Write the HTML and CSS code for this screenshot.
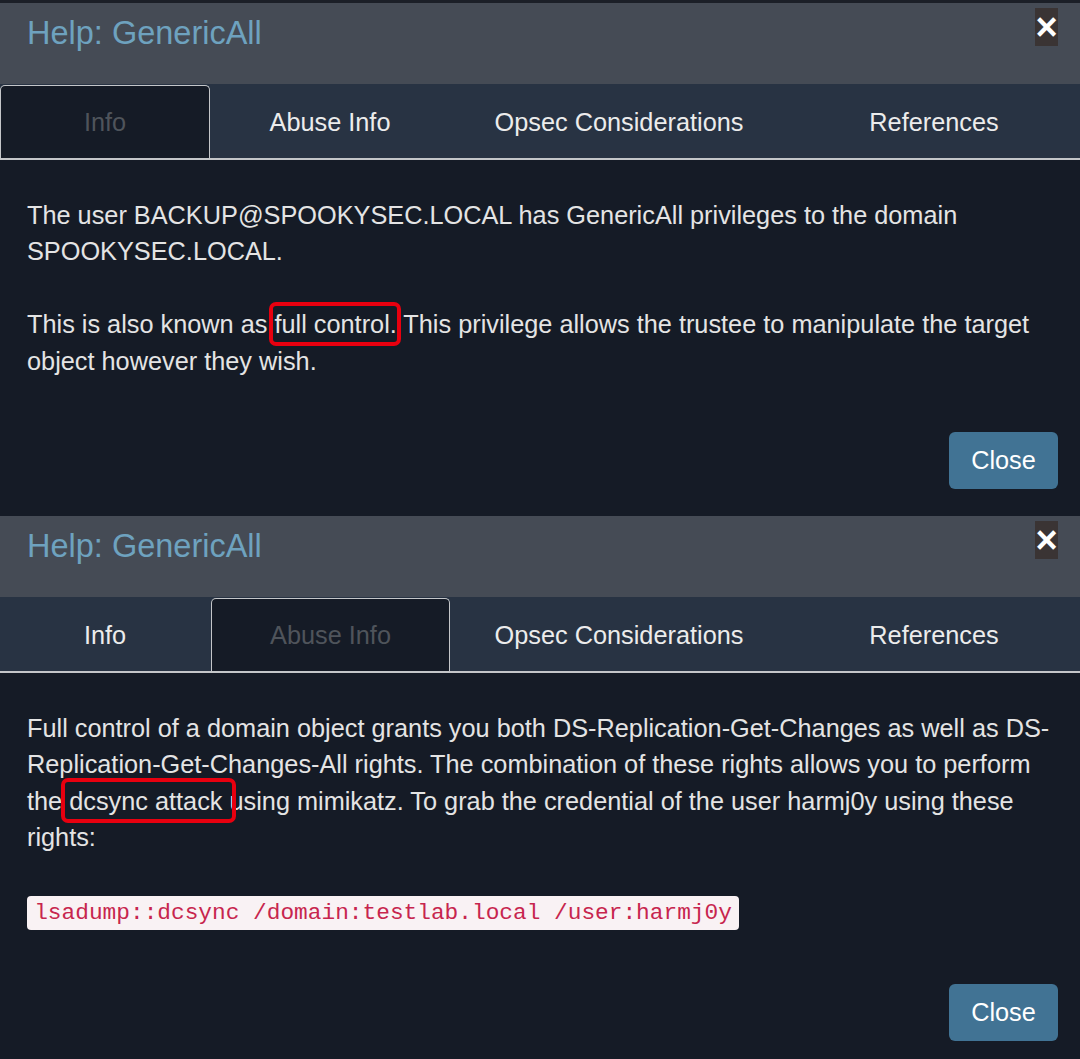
FILE: index.html
```html
<!DOCTYPE html>
<html>
<head>
<meta charset="utf-8">
<link rel="stylesheet" href="styles.css">
</head>
<body>
<div class="topstrip"></div>
<section class="modal">
  <header class="modal-header">
    <h4 class="modal-title">Help: GenericAll</h4>
    <button class="x-btn">&times;</button>
  </header>
  <nav class="tabs">
    <div class="tab tab-info active">Info</div>
    <div class="tab tab-abuse">Abuse Info</div>
    <div class="tab tab-opsec">Opsec Considerations</div>
    <div class="tab tab-refs">References</div>
  </nav>
  <div class="modal-body">
    <p>The user BACKUP@SPOOKYSEC.LOCAL has GenericAll privileges to the domain SPOOKYSEC.LOCAL.</p>
    <p>This is also known as <span class="mark mark-a">full control</span>. This privilege allows the trustee to manipulate the target object however they wish.</p>
  </div>
  <footer class="modal-footer">
    <button class="close-btn">Close</button>
  </footer>
</section>
<section class="modal modal-second">
  <header class="modal-header">
    <h4 class="modal-title">Help: GenericAll</h4>
    <button class="x-btn">&times;</button>
  </header>
  <nav class="tabs">
    <div class="tab tab-info">Info</div>
    <div class="tab tab-abuse active">Abuse Info</div>
    <div class="tab tab-opsec">Opsec Considerations</div>
    <div class="tab tab-refs">References</div>
  </nav>
  <div class="modal-body">
    <p>Full control of a domain object grants you both DS-Replication-Get-Changes as well as DS-Replication-Get-Changes-All rights. The combination of these rights allows you to perform the <span class="mark mark-b">dcsync attack </span>using mimikatz. To grab the credential of the user harmj0y using these rights:</p>
    <p><code class="cmd">lsadump::dcsync /domain:testlab.local /user:harmj0y</code></p>
  </div>
  <footer class="modal-footer">
    <button class="close-btn">Close</button>
  </footer>
</section>
</body>
</html>
```
FILE: styles.css
```css
html, body {
  margin: 0;
  padding: 0;
  background: #151b26;
}
body {
  width: 1080px;
  height: 1059px;
  overflow: hidden;
  font-family: "Liberation Sans", Arial, sans-serif;
  color: #e4e4e4;
}
.topstrip {
  height: 3px;
  background: #1b1f27;
}
.modal {
  background: #151b26;
}
.modal-header {
  box-sizing: border-box;
  height: 81px;
  padding: 10px 22px 0 27px;
  background: #454b55;
  display: flex;
  justify-content: space-between;
  align-items: flex-start;
}
.modal-title {
  margin: 0;
  font-size: 32.5px;
  line-height: 40px;
  font-weight: 400;
  color: #6ea2bf;
}
.x-btn {
  margin-top: -5px;
  width: 23px;
  height: 38px;
  padding: 0;
  border: 0;
  background: #3a3434;
  color: #ffffff;
  font-family: "Liberation Sans", Arial, sans-serif;
  font-size: 38px;
  font-weight: 700;
  line-height: 38px;
}
.tabs {
  display: grid;
  grid-template-columns: 210px 240px 338px 1fr;
  height: 76px;
  box-sizing: border-box;
  background: #283343;
  border-bottom: 2px solid #c4c6c9;
}
.tab {
  box-sizing: border-box;
  display: flex;
  align-items: center;
  justify-content: center;
  font-size: 25.3px;
  color: #ececec;
  padding-top: 2px;
}
.tab.active {
  background: #151b26;
  color: #4f545b;
  border: 1.5px solid #c4c6c9;
  border-bottom: 0;
  border-radius: 5px 5px 0 0;
  margin-top: 1px;
  padding-top: 1px;
}
.tab-abuse.active {
  margin-left: 1px;
}
.modal-body {
  padding: 37px 27px 0;
  font-size: 25.3px;
  line-height: 36.4px;
}
.modal-body p {
  margin: 0 0 36.4px;
}
.modal-body p:last-child {
  margin-bottom: 0;
}
.mark {
  position: relative;
}
.mark::after {
  content: "";
  position: absolute;
  border: 4.5px solid #e8000f;
  border-radius: 7px;
}
.mark-a::after {
  left: -5px;
  right: -11px;
  top: -8px;
  bottom: -8px;
}
.mark-b::after {
  left: -8px;
  right: -7px;
  top: -9px;
  bottom: -8px;
}
.cmd {
  font-family: "Liberation Mono", monospace;
  font-size: 22.8px;
  color: #c7254e;
  background: #f9f2f4;
  border-radius: 4px;
  padding: 3.6px 7.2px;
}
.modal-footer {
  padding: 53px 22px 27px;
  display: flex;
  justify-content: flex-end;
}
.close-btn {
  width: 109px;
  height: 57px;
  padding: 0;
  border: 0;
  border-radius: 6px;
  background: #417394;
  color: #ffffff;
  font-family: "Liberation Sans", Arial, sans-serif;
  font-size: 25.3px;
}
```
